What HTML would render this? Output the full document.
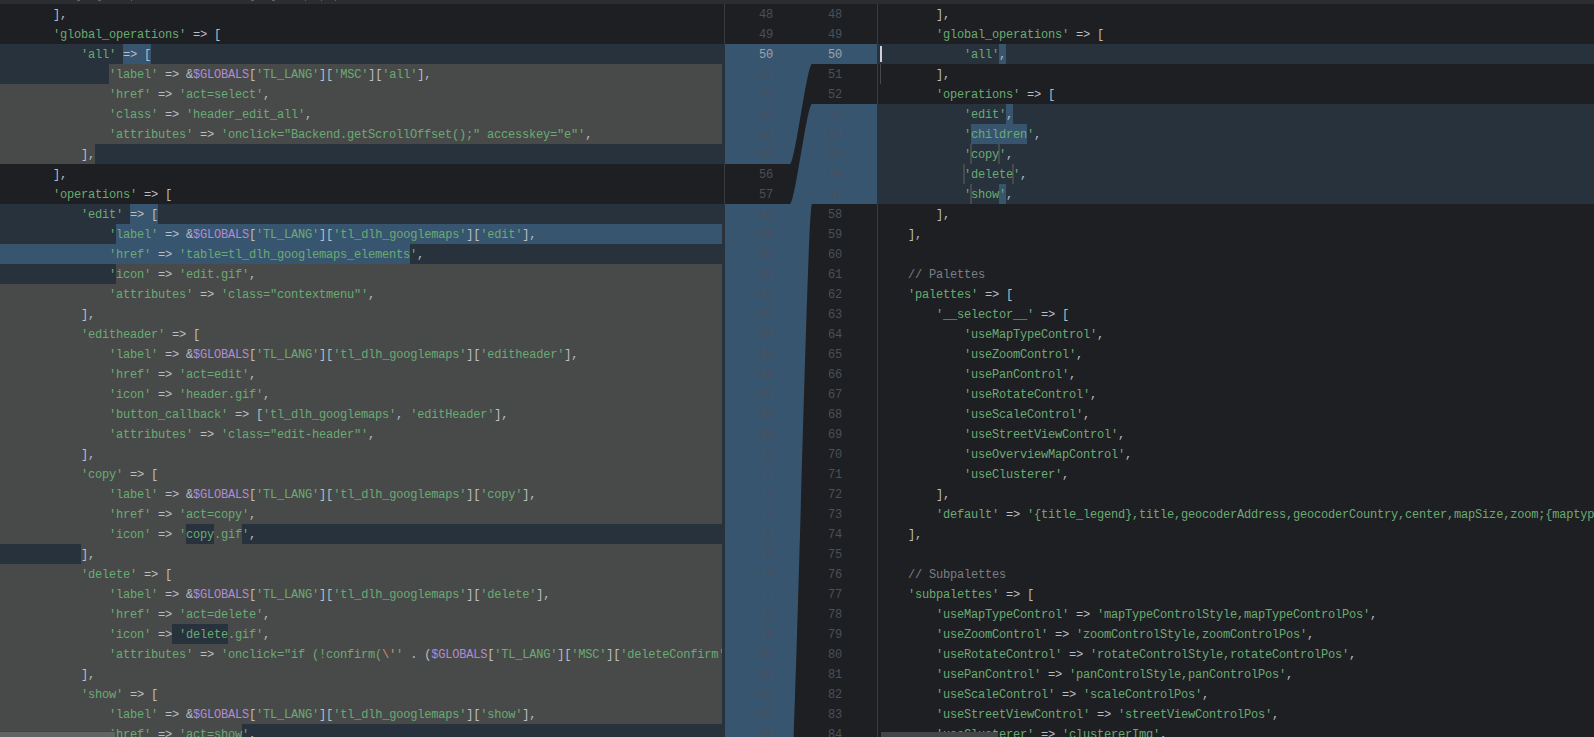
<!DOCTYPE html>
<html><head><meta charset="utf-8"><style>
html,body{margin:0;padding:0;}
body{width:1594px;height:737px;overflow:hidden;background:#1e1f22;position:relative;}
.bg div{position:absolute;}
.code{position:absolute;white-space:pre;font-family:"Liberation Mono";font-size:12px;letter-spacing:-0.2px;line-height:20px;color:#bcbec4;}
.t{color:#bcbec4}.s{color:#6aab73}.g{color:#b28ad2}.e{color:#cf8e6d}.c{color:#7a7e85}
.ln{position:absolute;white-space:pre;font-family:"Liberation Mono";font-size:12px;letter-spacing:-0.2px;line-height:20px;color:#4b5059;text-align:right;width:70px;}
</style></head><body>

<div style="position:absolute;left:0;top:0;width:1594px;height:4px;background:#2b2d30"></div>
<div style="position:absolute;left:724px;top:4px;width:1px;height:733px;background:#393b40"></div>
<div style="position:absolute;left:877px;top:4px;width:1px;height:733px;background:#393b40"></div>
<svg style="position:absolute;left:0;top:0" width="1594" height="737" viewBox="0 0 1594 737"><rect x="725" y="44" width="152" height="693" fill="#385570"/><path d="M725,164 L790,164 C795,164 807,64 812,64 L877,64 L877,104 L812,104 C807,104 795,204 790,204 L725,204 Z" fill="#1e1f22"/><path d="M877,204 L812,204 C807,204 795,796 790,796 L725,796 L725,996 L877,996 Z" fill="#1e1f22"/></svg>
<div class="bg">
<div style="left:0px;top:44px;width:725px;height:20px;background:#27323d"></div>
<div style="left:0px;top:64px;width:725px;height:20px;background:#27323d"></div>
<div style="left:0px;top:84px;width:725px;height:20px;background:#27323d"></div>
<div style="left:0px;top:104px;width:725px;height:20px;background:#27323d"></div>
<div style="left:0px;top:124px;width:725px;height:20px;background:#27323d"></div>
<div style="left:0px;top:144px;width:725px;height:20px;background:#27323d"></div>
<div style="left:0px;top:204px;width:725px;height:20px;background:#27323d"></div>
<div style="left:0px;top:224px;width:725px;height:20px;background:#27323d"></div>
<div style="left:0px;top:244px;width:725px;height:20px;background:#27323d"></div>
<div style="left:0px;top:264px;width:725px;height:20px;background:#27323d"></div>
<div style="left:0px;top:284px;width:725px;height:20px;background:#27323d"></div>
<div style="left:0px;top:304px;width:725px;height:20px;background:#27323d"></div>
<div style="left:0px;top:324px;width:725px;height:20px;background:#27323d"></div>
<div style="left:0px;top:344px;width:725px;height:20px;background:#27323d"></div>
<div style="left:0px;top:364px;width:725px;height:20px;background:#27323d"></div>
<div style="left:0px;top:384px;width:725px;height:20px;background:#27323d"></div>
<div style="left:0px;top:404px;width:725px;height:20px;background:#27323d"></div>
<div style="left:0px;top:424px;width:725px;height:20px;background:#27323d"></div>
<div style="left:0px;top:444px;width:725px;height:20px;background:#27323d"></div>
<div style="left:0px;top:464px;width:725px;height:20px;background:#27323d"></div>
<div style="left:0px;top:484px;width:725px;height:20px;background:#27323d"></div>
<div style="left:0px;top:504px;width:725px;height:20px;background:#27323d"></div>
<div style="left:0px;top:524px;width:725px;height:20px;background:#27323d"></div>
<div style="left:0px;top:544px;width:725px;height:20px;background:#27323d"></div>
<div style="left:0px;top:564px;width:725px;height:20px;background:#27323d"></div>
<div style="left:0px;top:584px;width:725px;height:20px;background:#27323d"></div>
<div style="left:0px;top:604px;width:725px;height:20px;background:#27323d"></div>
<div style="left:0px;top:624px;width:725px;height:20px;background:#27323d"></div>
<div style="left:0px;top:644px;width:725px;height:20px;background:#27323d"></div>
<div style="left:0px;top:664px;width:725px;height:20px;background:#27323d"></div>
<div style="left:0px;top:684px;width:725px;height:20px;background:#27323d"></div>
<div style="left:0px;top:704px;width:725px;height:20px;background:#27323d"></div>
<div style="left:0px;top:724px;width:725px;height:20px;background:#27323d"></div>
<div style="left:123px;top:44px;width:28px;height:20px;background:#385570"></div>
<div style="left:109px;top:64px;width:613px;height:20px;background:#484a4a"></div>
<div style="left:0px;top:84px;width:722px;height:20px;background:#484a4a"></div>
<div style="left:0px;top:104px;width:722px;height:20px;background:#484a4a"></div>
<div style="left:0px;top:124px;width:722px;height:20px;background:#484a4a"></div>
<div style="left:0px;top:144px;width:95px;height:20px;background:#484a4a"></div>
<div style="left:130px;top:204px;width:28px;height:20px;background:#385570"></div>
<div style="left:116px;top:224px;width:606px;height:20px;background:#385570"></div>
<div style="left:0px;top:244px;width:410px;height:20px;background:#385570"></div>
<div style="left:116px;top:264px;width:606px;height:20px;background:#484a4a"></div>
<div style="left:0px;top:284px;width:722px;height:20px;background:#484a4a"></div>
<div style="left:0px;top:304px;width:722px;height:20px;background:#484a4a"></div>
<div style="left:0px;top:324px;width:722px;height:20px;background:#484a4a"></div>
<div style="left:0px;top:344px;width:722px;height:20px;background:#484a4a"></div>
<div style="left:0px;top:364px;width:722px;height:20px;background:#484a4a"></div>
<div style="left:0px;top:384px;width:722px;height:20px;background:#484a4a"></div>
<div style="left:0px;top:404px;width:722px;height:20px;background:#484a4a"></div>
<div style="left:0px;top:424px;width:722px;height:20px;background:#484a4a"></div>
<div style="left:0px;top:444px;width:722px;height:20px;background:#484a4a"></div>
<div style="left:0px;top:464px;width:722px;height:20px;background:#484a4a"></div>
<div style="left:0px;top:484px;width:722px;height:20px;background:#484a4a"></div>
<div style="left:0px;top:504px;width:722px;height:20px;background:#484a4a"></div>
<div style="left:0px;top:524px;width:186px;height:20px;background:#484a4a"></div>
<div style="left:214px;top:524px;width:28px;height:20px;background:#484a4a"></div>
<div style="left:81px;top:544px;width:641px;height:20px;background:#484a4a"></div>
<div style="left:0px;top:564px;width:722px;height:20px;background:#484a4a"></div>
<div style="left:0px;top:584px;width:722px;height:20px;background:#484a4a"></div>
<div style="left:0px;top:604px;width:722px;height:20px;background:#484a4a"></div>
<div style="left:0px;top:624px;width:172px;height:20px;background:#484a4a"></div>
<div style="left:228px;top:624px;width:494px;height:20px;background:#484a4a"></div>
<div style="left:0px;top:644px;width:722px;height:20px;background:#484a4a"></div>
<div style="left:0px;top:664px;width:722px;height:20px;background:#484a4a"></div>
<div style="left:0px;top:684px;width:722px;height:20px;background:#484a4a"></div>
<div style="left:0px;top:704px;width:722px;height:20px;background:#484a4a"></div>
<div style="left:0px;top:724px;width:242px;height:20px;background:#484a4a"></div>
<div style="left:877px;top:44px;width:717px;height:20px;background:#27323d"></div>
<div style="left:877px;top:104px;width:717px;height:20px;background:#27323d"></div>
<div style="left:877px;top:124px;width:717px;height:20px;background:#27323d"></div>
<div style="left:877px;top:144px;width:717px;height:20px;background:#27323d"></div>
<div style="left:877px;top:164px;width:717px;height:20px;background:#27323d"></div>
<div style="left:877px;top:184px;width:717px;height:20px;background:#27323d"></div>
<div style="left:999px;top:44px;width:7px;height:20px;background:#385570"></div>
<div style="left:1006px;top:104px;width:7px;height:20px;background:#385570"></div>
<div style="left:971px;top:124px;width:56px;height:20px;background:#385570"></div>
<div style="left:999px;top:184px;width:7px;height:20px;background:#385570"></div>
<div style="left:970px;top:144px;width:2px;height:20px;background:#484a4a"></div>
<div style="left:998px;top:144px;width:2px;height:20px;background:#484a4a"></div>
<div style="left:963px;top:164px;width:2px;height:20px;background:#484a4a"></div>
<div style="left:1012px;top:164px;width:2px;height:20px;background:#484a4a"></div>
<div style="left:970px;top:184px;width:2px;height:20px;background:#484a4a"></div>
</div>
<div style="position:absolute;left:0;top:4px;width:722px;height:733px;overflow:hidden">
<div class="code" style="left:-3px;top:1px">        ],
        <span class="s">'global_operations'</span> =&gt; [
            <span class="s">'all'</span> =&gt; [
                <span class="s">'label'</span> =&gt; &amp;<span class="g">$GLOBALS</span>[<span class="s">'TL_LANG'</span>][<span class="s">'MSC'</span>][<span class="s">'all'</span>],
                <span class="s">'href'</span> =&gt; <span class="s">'act=select'</span>,
                <span class="s">'class'</span> =&gt; <span class="s">'header_edit_all'</span>,
                <span class="s">'attributes'</span> =&gt; <span class="s">'onclick="Backend.getScrollOffset();" accesskey="e"'</span>,
            ],
        ],
        <span class="s">'operations'</span> =&gt; [
            <span class="s">'edit'</span> =&gt; [
                <span class="s">'label'</span> =&gt; &amp;<span class="g">$GLOBALS</span>[<span class="s">'TL_LANG'</span>][<span class="s">'tl_dlh_googlemaps'</span>][<span class="s">'edit'</span>],
                <span class="s">'href'</span> =&gt; <span class="s">'table=tl_dlh_googlemaps_elements'</span>,
                <span class="s">'icon'</span> =&gt; <span class="s">'edit.gif'</span>,
                <span class="s">'attributes'</span> =&gt; <span class="s">'class="contextmenu"'</span>,
            ],
            <span class="s">'editheader'</span> =&gt; [
                <span class="s">'label'</span> =&gt; &amp;<span class="g">$GLOBALS</span>[<span class="s">'TL_LANG'</span>][<span class="s">'tl_dlh_googlemaps'</span>][<span class="s">'editheader'</span>],
                <span class="s">'href'</span> =&gt; <span class="s">'act=edit'</span>,
                <span class="s">'icon'</span> =&gt; <span class="s">'header.gif'</span>,
                <span class="s">'button_callback'</span> =&gt; [<span class="s">'tl_dlh_googlemaps'</span>, <span class="s">'editHeader'</span>],
                <span class="s">'attributes'</span> =&gt; <span class="s">'class="edit-header"'</span>,
            ],
            <span class="s">'copy'</span> =&gt; [
                <span class="s">'label'</span> =&gt; &amp;<span class="g">$GLOBALS</span>[<span class="s">'TL_LANG'</span>][<span class="s">'tl_dlh_googlemaps'</span>][<span class="s">'copy'</span>],
                <span class="s">'href'</span> =&gt; <span class="s">'act=copy'</span>,
                <span class="s">'icon'</span> =&gt; <span class="s">'copy.gif'</span>,
            ],
            <span class="s">'delete'</span> =&gt; [
                <span class="s">'label'</span> =&gt; &amp;<span class="g">$GLOBALS</span>[<span class="s">'TL_LANG'</span>][<span class="s">'tl_dlh_googlemaps'</span>][<span class="s">'delete'</span>],
                <span class="s">'href'</span> =&gt; <span class="s">'act=delete'</span>,
                <span class="s">'icon'</span> =&gt; <span class="s">'delete.gif'</span>,
                <span class="s">'attributes'</span> =&gt; <span class="s">'onclick="if (!confirm(</span><span class="e">\'</span><span class="s">'</span> . (<span class="g">$GLOBALS</span>[<span class="s">'TL_LANG'</span>][<span class="s">'MSC'</span>][<span class="s">'deleteConfirm'</span>] . <span class="s">'</span><span class="e">\'</span><span class="s">))return false;Backend.getScrollOffset()"'</span>,
            ],
            <span class="s">'show'</span> =&gt; [
                <span class="s">'label'</span> =&gt; &amp;<span class="g">$GLOBALS</span>[<span class="s">'TL_LANG'</span>][<span class="s">'tl_dlh_googlemaps'</span>][<span class="s">'show'</span>],
                <span class="s">'href'</span> =&gt; <span class="s">'act=show'</span>,</div></div>
<div style="position:absolute;left:878px;top:4px;width:716px;height:733px;overflow:hidden">
<div class="code" style="left:2px;top:1px">        ],
        <span class="s">'global_operations'</span> =&gt; [
            <span class="s">'all'</span>,
        ],
        <span class="s">'operations'</span> =&gt; [
            <span class="s">'edit'</span>,
            <span class="s">'children'</span>,
            <span class="s">'copy'</span>,
            <span class="s">'delete'</span>,
            <span class="s">'show'</span>,
        ],
    ],

    <span class="c">// Palettes</span>
    <span class="s">'palettes'</span> =&gt; [
        <span class="s">'__selector__'</span> =&gt; [
            <span class="s">'useMapTypeControl'</span>,
            <span class="s">'useZoomControl'</span>,
            <span class="s">'usePanControl'</span>,
            <span class="s">'useRotateControl'</span>,
            <span class="s">'useScaleControl'</span>,
            <span class="s">'useStreetViewControl'</span>,
            <span class="s">'useOverviewMapControl'</span>,
            <span class="s">'useClusterer'</span>,
        ],
        <span class="s">'default'</span> =&gt; <span class="s">'{title_legend},title,geocoderAddress,geocoderCountry,center,mapSize,zoom;{maptype_legend},useMapTypeControl'</span>,
    ],

    <span class="c">// Subpalettes</span>
    <span class="s">'subpalettes'</span> =&gt; [
        <span class="s">'useMapTypeControl'</span> =&gt; <span class="s">'mapTypeControlStyle,mapTypeControlPos'</span>,
        <span class="s">'useZoomControl'</span> =&gt; <span class="s">'zoomControlStyle,zoomControlPos'</span>,
        <span class="s">'useRotateControl'</span> =&gt; <span class="s">'rotateControlStyle,rotateControlPos'</span>,
        <span class="s">'usePanControl'</span> =&gt; <span class="s">'panControlStyle,panControlPos'</span>,
        <span class="s">'useScaleControl'</span> =&gt; <span class="s">'scaleControlPos'</span>,
        <span class="s">'useStreetViewControl'</span> =&gt; <span class="s">'streetViewControlPos'</span>,
        <span class="s">'useClusterer'</span> =&gt; <span class="s">'clustererImg'</span>,</div></div>
<div class="ln" style="left:703px;top:5px"><span style="color:#4b5059">48</span>
<span style="color:#4b5059">49</span>
<span style="color:#a1a3ab">50</span>
<span style="color:#4b5059">51</span>
<span style="color:#4b5059">52</span>
<span style="color:#4b5059">53</span>
<span style="color:#4b5059">54</span>
<span style="color:#4b5059">55</span>
<span style="color:#4b5059">56</span>
<span style="color:#4b5059">57</span>
<span style="color:#4b5059">58</span>
<span style="color:#4b5059">59</span>
<span style="color:#4b5059">60</span>
<span style="color:#4b5059">61</span>
<span style="color:#4b5059">62</span>
<span style="color:#4b5059">63</span>
<span style="color:#4b5059">64</span>
<span style="color:#4b5059">65</span>
<span style="color:#4b5059">66</span>
<span style="color:#4b5059">67</span>
<span style="color:#4b5059">68</span>
<span style="color:#4b5059">69</span>
<span style="color:#4b5059">70</span>
<span style="color:#4b5059">71</span>
<span style="color:#4b5059">72</span>
<span style="color:#4b5059">73</span>
<span style="color:#4b5059">74</span>
<span style="color:#4b5059">75</span>
<span style="color:#4b5059">76</span>
<span style="color:#4b5059">77</span>
<span style="color:#4b5059">78</span>
<span style="color:#4b5059">79</span>
<span style="color:#4b5059">80</span>
<span style="color:#4b5059">81</span>
<span style="color:#4b5059">82</span>
<span style="color:#4b5059">83</span>
<span style="color:#4b5059">84</span></div>
<div class="ln" style="left:772px;top:5px"><span style="color:#4b5059">48</span>
<span style="color:#4b5059">49</span>
<span style="color:#a1a3ab">50</span>
<span style="color:#4b5059">51</span>
<span style="color:#4b5059">52</span>
<span style="color:#4b5059">53</span>
<span style="color:#4b5059">54</span>
<span style="color:#4b5059">55</span>
<span style="color:#4b5059">56</span>
<span style="color:#4b5059">57</span>
<span style="color:#4b5059">58</span>
<span style="color:#4b5059">59</span>
<span style="color:#4b5059">60</span>
<span style="color:#4b5059">61</span>
<span style="color:#4b5059">62</span>
<span style="color:#4b5059">63</span>
<span style="color:#4b5059">64</span>
<span style="color:#4b5059">65</span>
<span style="color:#4b5059">66</span>
<span style="color:#4b5059">67</span>
<span style="color:#4b5059">68</span>
<span style="color:#4b5059">69</span>
<span style="color:#4b5059">70</span>
<span style="color:#4b5059">71</span>
<span style="color:#4b5059">72</span>
<span style="color:#4b5059">73</span>
<span style="color:#4b5059">74</span>
<span style="color:#4b5059">75</span>
<span style="color:#4b5059">76</span>
<span style="color:#4b5059">77</span>
<span style="color:#4b5059">78</span>
<span style="color:#4b5059">79</span>
<span style="color:#4b5059">80</span>
<span style="color:#4b5059">81</span>
<span style="color:#4b5059">82</span>
<span style="color:#4b5059">83</span>
<span style="color:#4b5059">84</span></div>
<div style="position:absolute;left:880px;top:46px;width:2px;height:16px;background:#ced0d6"></div>
<div style="position:absolute;left:880px;top:64px;width:1px;height:20px;background:#45474a"></div>
<div style="position:absolute;left:0;top:731px;width:115px;height:1px;background:#434544"></div>
<div style="position:absolute;left:0;top:732px;width:115px;height:5px;background:#626362"></div>
<div style="position:absolute;left:881px;top:732px;width:117px;height:5px;background:#454547"></div>
<div style="position:absolute;left:77px;top:0;width:3px;height:1px;background:#5f6166"></div>
<div style="position:absolute;left:98px;top:0;width:3px;height:1px;background:#5f6166"></div>
<div style="position:absolute;left:131px;top:0;width:1px;height:1px;background:#4f6e55"></div>
<div style="position:absolute;left:251px;top:0;width:3px;height:1px;background:#5f6166"></div>
<div style="position:absolute;left:272px;top:0;width:3px;height:1px;background:#5f6166"></div>
<div style="position:absolute;left:305px;top:0;width:1px;height:1px;background:#4f6e55"></div>
<div style="position:absolute;left:321px;top:0;width:1px;height:1px;background:#4f6e55"></div>
<div style="position:absolute;left:335px;top:0;width:1px;height:1px;background:#4f6e55"></div>
</body></html>
